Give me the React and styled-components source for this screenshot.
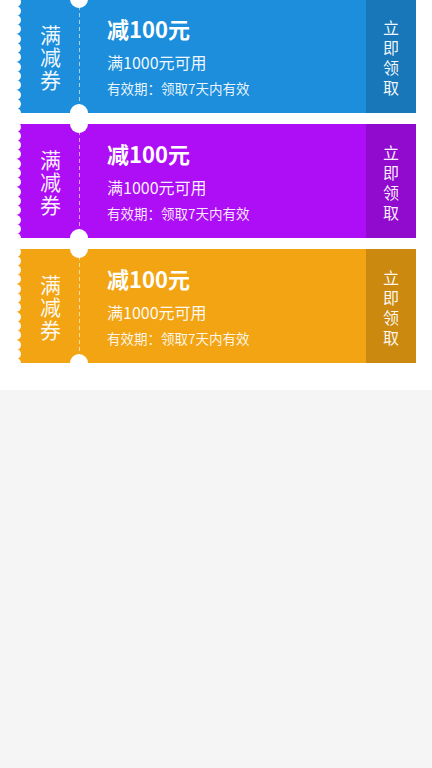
import React from "react";
import styled, { createGlobalStyle } from "styled-components";

const Global = createGlobalStyle`
  html, body { margin: 0; padding: 0; background: #f5f5f5; }
  body { font-family: "Noto Sans CJK SC", "Noto Sans", sans-serif; }
`;

const Wrap = styled.div`
  background: #fff;
  padding: 0 16px 27px;
  display: flex;
  flex-direction: column;
  gap: 11px;
  overflow: hidden;
`;

const Card = styled.div`
  position: relative;
  display: flex;
  height: 114px;
  background: ${(p) => p.$color};
  color: #fff;
  overflow: hidden;
  &:first-child { margin-top: -1px; }
`;

const Scallops = styled.div`
  position: absolute;
  left: -5px;
  top: -2.5px;
  display: flex;
  flex-direction: column;
  gap: 0;
`;

const Dot = styled.span`
  display: block;
  width: 10px;
  height: 10px;
  margin-bottom: -0.7px;
  border-radius: 50%;
  background: #fff;
`;

const Notch = styled.span`
  position: absolute;
  left: 54px;
  width: 18px;
  height: 18px;
  border-radius: 50%;
  background: #fff;
  ${(p) => (p.$top ? "top: -9px;" : "bottom: -9px;")}
`;

const Side = styled.div`
  width: 59px;
  padding-left: 5px;
  background-image: linear-gradient(to bottom, rgba(255, 255, 255, 0.6) 4px, rgba(255, 255, 255, 0) 4px);
  background-size: 1px 7px;
  background-position: right top;
  background-repeat: repeat-y;
  display: flex;
  align-items: center;
  justify-content: center;
`;

const Vertical = styled.div`
  width: 1em;
  font-size: ${(p) => p.$size}px;
  line-height: ${(p) => p.$lh}px;
  word-break: break-all;
  text-align: center;
  padding-top: ${(p) => p.$pt || 0}px;
  color: rgba(255, 255, 255, 0.95);
`;

const Body = styled.div`
  flex: 1;
  padding-left: 27px;
  padding-top: 17px;
  display: flex;
  flex-direction: column;
`;

const Title = styled.div`
  font-size: 22px;
  font-weight: 700;
  line-height: 24px;
`;

const Cond = styled.div`
  font-size: 16px;
  line-height: 22px;
  margin-top: 11px;
  color: rgba(255, 255, 255, 0.95);
`;

const Valid = styled.div`
  font-size: 13.5px;
  line-height: 18px;
  margin-top: 6px;
  color: rgba(255, 255, 255, 0.92);
`;

const Take = styled.div`
  width: 50px;
  background: rgba(0, 0, 0, 0.16);
  display: flex;
  align-items: center;
  justify-content: center;
`;

const coupons = [
  { color: "#1C8EDC" },
  { color: "#AD0EF6" },
  { color: "#F2A413" },
];

const dots = Array.from({ length: 13 });

export default function App() {
  return (
    <>
      <Global />
      <Wrap>
        {coupons.map((c, i) => (
          <Card key={i} $color={c.color}>
            <Scallops>
              {dots.map((_, j) => (
                <Dot key={j} />
              ))}
            </Scallops>
            <Notch $top />
            <Notch />
            <Side>
              <Vertical $size={21} $lh={22.5} $pt={1}>满减券</Vertical>
            </Side>
            <Body>
              <Title>减100元</Title>
              <Cond>满1000元可用</Cond>
              <Valid>有效期：领取7天内有效</Valid>
            </Body>
            <Take>
              <Vertical $size={16} $lh={20} $pt={1}>立即领取</Vertical>
            </Take>
          </Card>
        ))}
      </Wrap>
    </>
  );
}
